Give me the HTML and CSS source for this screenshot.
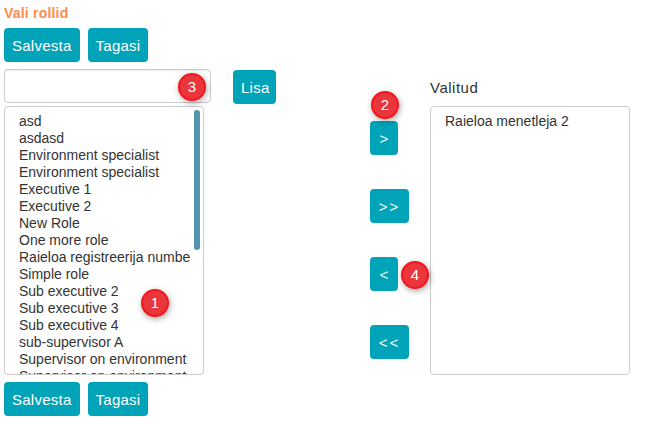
FILE: index.html
```html
<!DOCTYPE html>
<html lang="en">
<head>
    <meta charset="UTF-8">
    <title>Vali rollid</title>
    <link rel="stylesheet" href="styles.css">
</head>
<body>
    <h1 class="title">Vali rollid</h1>

    <div class="actions">
        <button class="btn">Salvesta</button>
        <button class="btn">Tagasi</button>
    </div>

    <div class="picker">
        <div class="left-col">
            <div class="search-row">
                <input type="text" class="search">
                <button class="btn lisa">Lisa</button>
            </div>
            <div class="list list-left">
                <div>asd</div>
                <div>asdasd</div>
                <div>Environment specialist</div>
                <div>Environment specialist</div>
                <div>Executive 1</div>
                <div>Executive 2</div>
                <div>New Role</div>
                <div>One more role</div>
                <div>Raieloa registreerija numbe</div>
                <div>Simple role</div>
                <div>Sub executive 2</div>
                <div>Sub executive 3</div>
                <div>Sub executive 4</div>
                <div>sub-supervisor A</div>
                <div>Supervisor on environment</div>
                <div>Supervisor on environment</div>
                <span class="scroll-thumb"></span>
            </div>
        </div>

        <div class="move-col">
            <button class="btn move">&gt;</button>
            <button class="btn move move-all">&gt;&gt;</button>
            <button class="btn move">&lt;</button>
            <button class="btn move move-all">&lt;&lt;</button>
        </div>

        <div class="right-col">
            <label class="list-label">Valitud</label>
            <div class="list list-right">
                <div>Raieloa menetleja 2</div>
            </div>
        </div>
    </div>

    <div class="actions actions-bottom">
        <button class="btn">Salvesta</button>
        <button class="btn">Tagasi</button>
    </div>

    <span class="badge badge-1">1</span>
    <span class="badge badge-2">2</span>
    <span class="badge badge-3">3</span>
    <span class="badge badge-4">4</span>
</body>
</html>
```

FILE: styles.css
```css
*{
    box-sizing: border-box;
}

body{
    margin: 0;
    padding: 4px;
    background-color: white;
    color: #333;
    font-family: "Liberation Sans", Arial, sans-serif;
    font-size: 14px;
    position: relative;
}

.title{
    margin: 0 0 6px 0;
    height: 18px;
    font-size: 14px;
    line-height: 18px;
    font-weight: bold;
    letter-spacing: 0.2px;
    color: #ff8a4c;
}

.actions{
    display: flex;
    gap: 8px;
}

.actions-bottom{
    margin-top: 7px;
}

.btn{
    height: 34px;
    padding: 0 8px;
    border: none;
    border-radius: 4px;
    background-color: #00a3b7;
    color: white;
    font-family: inherit;
    font-size: 15px;
    letter-spacing: 0.25px;
}

.picker{
    display: flex;
    margin-top: 7px;
}

.left-col{
    width: 366px;
}

.search-row{
    display: flex;
    align-items: flex-start;
}

.search{
    width: 207px;
    height: 34px;
    border: 1px solid #ccc;
    border-radius: 4px;
    box-shadow: inset 0 1px 1px rgba(0,0,0,0.075);
}

.lisa{
    margin-top: 1px;
    margin-left: 22px;
    width: 43px;
}

.list{
    position: relative;
    width: 200px;
    height: 269px;
    border: 1px solid #ccc;
    border-radius: 4px;
    overflow: hidden;
    padding: 6px 14px;
    line-height: 17px;
    white-space: nowrap;
    background-color: white;
}

.list-left{
    margin-top: 2px;
}

.scroll-thumb{
    position: absolute;
    top: 3px;
    right: 3px;
    width: 6px;
    height: 140px;
    border-radius: 3px;
    background-color: #5095ab;
}

.move-col{
    display: flex;
    flex-direction: column;
    align-items: flex-start;
    gap: 34px;
    width: 60px;
    padding-top: 52px;
}

.move{
    padding: 0;
    width: 28px;
}

.move-all{
    width: 39px;
    letter-spacing: 2px;
}

.right-col{
    display: flex;
    flex-direction: column;
}

.list-label{
    height: 37px;
    padding-top: 10px;
    font-size: 15px;
    letter-spacing: 0.5px;
}

.badge{
    position: absolute;
    width: 28px;
    height: 28px;
    border: 2px solid #f5151b;
    border-radius: 50%;
    background-color: #e8363c;
    box-shadow: 1px 2px 6px rgba(0,0,0,0.35);
    color: white;
    font-size: 15px;
    line-height: 24px;
    text-align: center;
}

.badge-1{
    left: 141px;
    top: 289px;
}

.badge-2{
    left: 371px;
    top: 91px;
}

.badge-3{
    left: 178px;
    top: 73px;
}

.badge-4{
    left: 401px;
    top: 261px;
}
```
